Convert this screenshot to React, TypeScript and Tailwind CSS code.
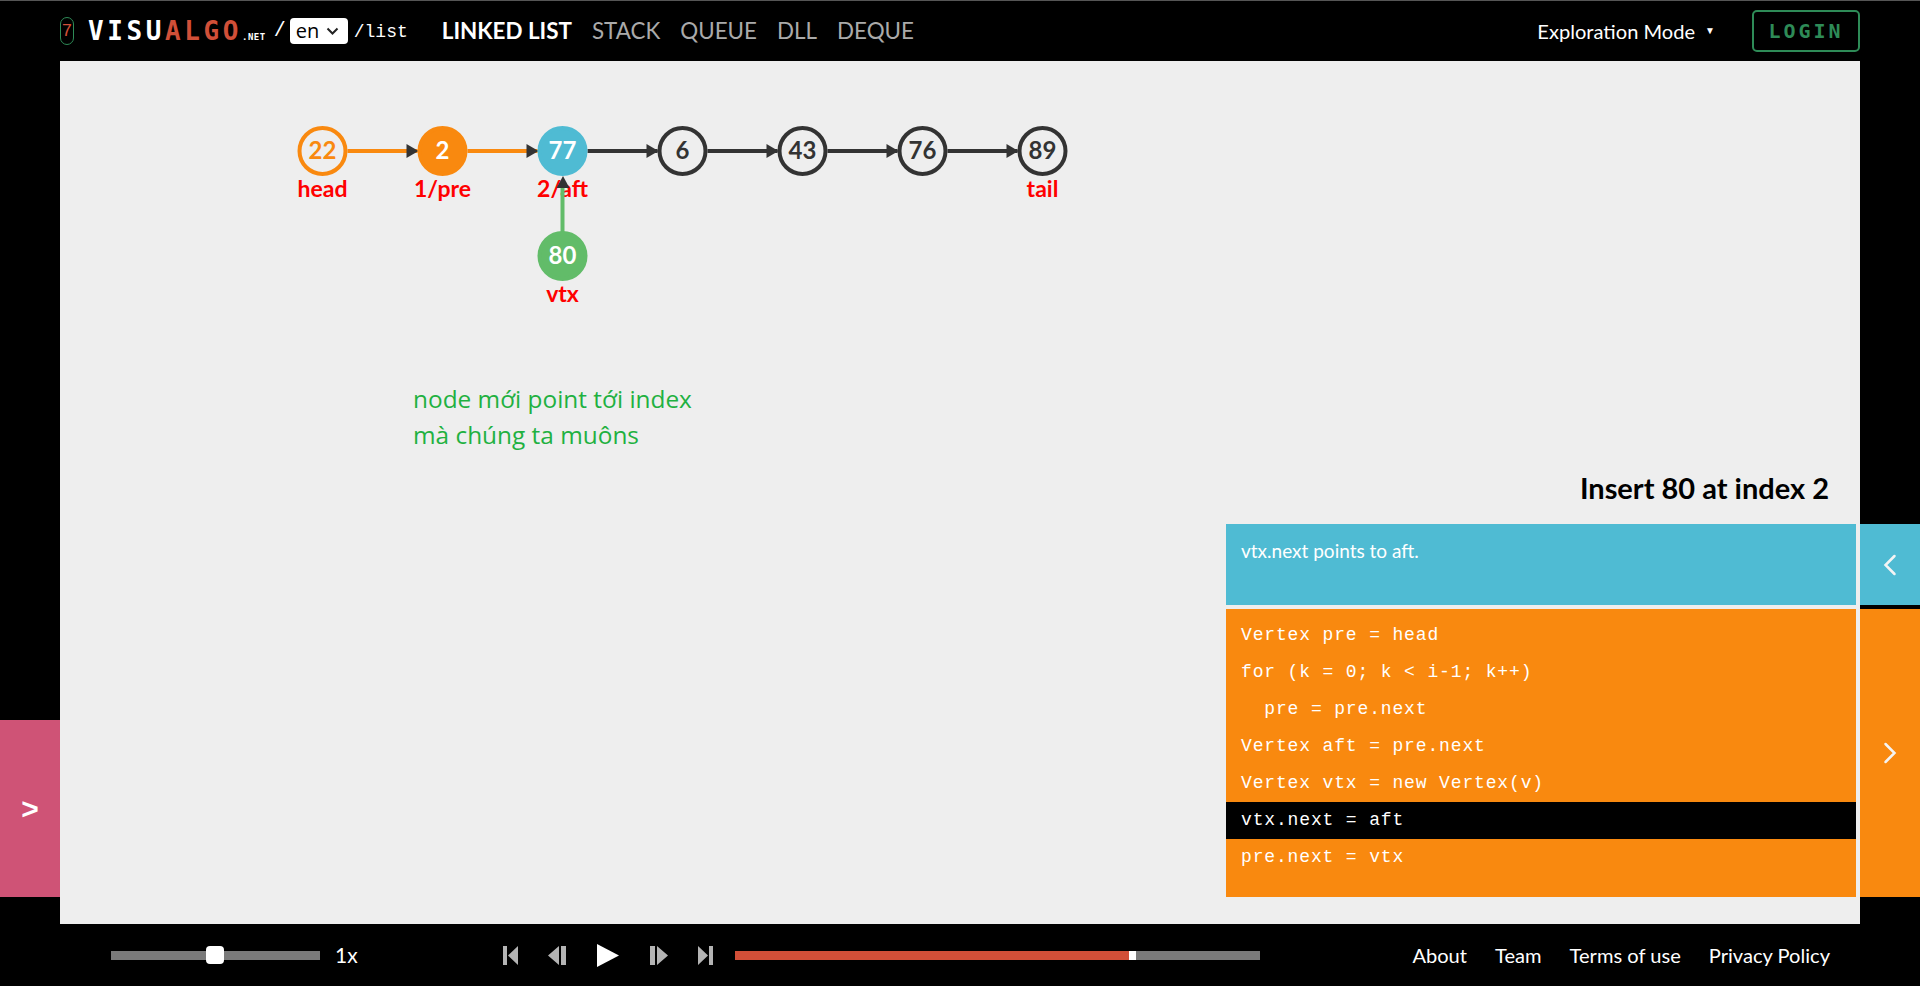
const CODE = [
  'Vertex pre = head',
  'for (k = 0; k < i-1; k++)',
  '  pre = pre.next',
  'Vertex aft = pre.next',
  'Vertex vtx = new Vertex(v)',
  'vtx.next = aft',
  'pre.next = vtx',
];

const ACTIVE_LINE = 5;

const SANS = 'font-["Lato","Open_Sans",sans-serif]';

type GraphNode = {
  x: number;
  y: number;
  value: string;
  label?: string;
  fill: string;
  stroke: string;
  text: string;
};

const NODES: GraphNode[] = [
  { x: 322, y: 151, value: '22', label: 'head', fill: '#eeeeee', stroke: '#f9890f', text: '#f9890f' },
  { x: 442, y: 151, value: '2', label: '1/pre', fill: '#f9890f', stroke: '#f9890f', text: '#ffffff' },
  { x: 562, y: 151, value: '77', label: '2/aft', fill: '#4fbbd3', stroke: '#4fbbd3', text: '#ffffff' },
  { x: 682, y: 151, value: '6', fill: '#eeeeee', stroke: '#333333', text: '#333333' },
  { x: 802, y: 151, value: '43', fill: '#eeeeee', stroke: '#333333', text: '#333333' },
  { x: 922, y: 151, value: '76', fill: '#eeeeee', stroke: '#333333', text: '#333333' },
  { x: 1042, y: 151, value: '89', label: 'tail', fill: '#eeeeee', stroke: '#333333', text: '#333333' },
  { x: 562, y: 256, value: '80', label: 'vtx', fill: '#62bc69', stroke: '#62bc69', text: '#ffffff' },
];

const EDGE_COLORS = ['#f9890f', '#f9890f', '#333333', '#333333', '#333333', '#333333'];

function Graph() {
  return (
    <svg width="1200" height="255" viewBox="59.5 61 1200 255" className="block shrink-0">
      {EDGE_COLORS.map((color, i) => {
        const x = NODES[i].x;
        return (
          <g key={i}>
            <rect x={x + 25} y={149} width={70} height={4} fill={color} />
            <path d={`M${x + 84} 144 L${x + 96} 151 L${x + 84} 158 Z`} fill="#333333" />
          </g>
        );
      })}
      {NODES.map((n) => (
        <g key={n.value}>
          <circle cx={n.x} cy={n.y} r={23} fill={n.fill} stroke={n.stroke} strokeWidth={4} />
          <text
            x={n.x}
            y={n.y + 8}
            textAnchor="middle"
            fill={n.text}
            fontSize={24}
            fontWeight={700}
            fontFamily="Lato, 'Open Sans', sans-serif"
          >
            {n.value}
          </text>
          {n.label && (
            <text
              x={n.x}
              y={n.y + 46}
              textAnchor="middle"
              fill="#ff0000"
              fontSize={23}
              fontWeight={700}
              fontFamily="Lato, 'Open Sans', sans-serif"
            >
              {n.label}
            </text>
          )}
        </g>
      ))}
      <rect x={560} y={186} width={4} height={46} fill="#62bc69" />
      <path d="M556 188 L562.5 176 L569 188 Z" fill="#333333" />
    </svg>
  );
}

function Header() {
  return (
    <header className="h-[61px] shrink-0 border-t border-[#555555] bg-black flex items-center pl-[60px] pr-[60px] text-white">
      <div className="w-[14px] h-[28px] rounded-[7px] border border-[#2e8b57] flex items-center justify-center text-[#d14f38] text-[18px] font-['Liberation_Mono',monospace]">
        7
      </div>
      <div className="ml-[14px] text-[26px] leading-none font-bold tracking-[3.6px] font-['DejaVu_Sans_Mono',monospace] whitespace-nowrap">
        VISU<span className="text-[#d14f38]">ALGO</span>
      </div>
      <span className="ml-[0px] mt-[13px] text-[9px] font-bold tracking-[0.5px] font-['DejaVu_Sans_Mono',monospace]">.NET</span>
      <span className="ml-[8px] text-[20px] font-['Liberation_Mono',monospace]">/</span>
      <div className="ml-[4px] w-[58px] h-[26px] bg-white rounded-[4px] text-black text-[20px] leading-[26px] pl-[6px] flex items-center gap-[7px] font-['Open_Sans',sans-serif]">
        en
        <svg width="13" height="9" viewBox="0 0 13 9" fill="none" stroke="#222" strokeWidth="2"><path d="M1.5 1.5 L6.5 6.5 L11.5 1.5" /></svg>
      </div>
      <span className="ml-[6px] text-[18px] mt-[2px] font-['Liberation_Mono',monospace]">/list</span>
      <nav className={`ml-[34px] flex items-center gap-[20px] text-[22.4px] text-[#aaaaaa] ${SANS}`}>
        <span className="font-bold text-white">LINKED LIST</span>
        <span>STACK</span>
        <span>QUEUE</span>
        <span>DLL</span>
        <span>DEQUE</span>
      </nav>
      <div className={`ml-auto flex items-center text-[20.1px] ${SANS}`}>
        Exploration Mode
        <span className="ml-[10px] text-[10px]">▼</span>
      </div>
      <div className="ml-[37px] w-[108px] h-[42px] rounded-[5px] border-2 border-[#2e8b57] flex items-center justify-center text-[#2e8b57] text-[20px] font-bold tracking-[3px] font-['DejaVu_Sans_Mono',monospace]">
        LOGIN
      </div>
    </header>
  );
}

function Chevron({ dir }: { dir: 'left' | 'right' }) {
  return (
    <svg width="14" height="22" viewBox="0 0 14 22" fill="none" stroke="#f4f4f4" strokeWidth="2.5" strokeLinecap="round">
      <path d={dir === 'left' ? 'M11.5 2 L2.5 11 L11.5 20' : 'M2.5 2 L11.5 11 L2.5 20'} />
    </svg>
  );
}

function Media({ d, w, h, color = '#b4b4b4' }: { d: string; w: number; h: number; color?: string }) {
  return (
    <svg width={w} height={h} viewBox={`0 0 ${w} ${h}`} fill={color} className="shrink-0">
      <path d={d} />
    </svg>
  );
}

function Footer() {
  return (
    <footer className={`h-[62px] shrink-0 bg-black flex items-center pl-[111px] pr-[90px] text-white ${SANS}`}>
      <div className="relative w-[209px] h-[9px] bg-[#7a7a7a]">
        <div className="absolute left-[95px] top-[-5px] w-[18px] h-[18px] rounded-[4px] bg-white" />
      </div>
      <span className="ml-[15px] w-[168px] text-[21px]">1x</span>
      <div className="flex items-center">
        <Media w={15} h={19} d="M0 0 H4 V19 H0 Z M15 0 V19 L5 9.5 Z" />
        <div className="w-[30px]" />
        <Media w={18} h={19} d="M11 0 V19 L0 9.5 Z M13 0 H18 V19 H13 Z" />
        <div className="w-[31px]" />
        <Media w={22} h={23} color="#ffffff" d="M0 0 L22 11.5 L0 23 Z" />
        <div className="w-[31px]" />
        <Media w={18} h={19} d="M0 0 H5 V19 H0 Z M7 0 L18 9.5 L7 19 Z" />
        <div className="w-[30px]" />
        <Media w={15} h={19} d="M0 0 L10 9.5 L0 19 Z M11 0 H15 V19 H11 Z" />
      </div>
      <div className="ml-[22px] w-[525px] h-[9px] bg-[#7a7a7a] flex">
        <div className="w-[394px] bg-[#d14f38]" />
        <div className="w-[7px] bg-white" />
      </div>
      <nav className="ml-auto flex items-center gap-[28px] text-[20.1px]">
        <span>About</span>
        <span>Team</span>
        <span>Terms of use</span>
        <span>Privacy Policy</span>
      </nav>
    </footer>
  );
}

export default function App() {
  return (
    <div className="w-[1920px] h-[986px] bg-black flex flex-col overflow-hidden">
      <Header />
      <div className="flex flex-1 min-h-0">
        <div className="w-[60px] shrink-0 flex flex-col justify-end pb-[27px]">
          <div className="h-[177px] bg-[#cf5376] flex items-center justify-center text-white text-[30px] font-bold font-['Liberation_Sans',sans-serif]">
            &gt;
          </div>
        </div>
        <main className={`w-[1800px] shrink-0 bg-[#eeeeee] flex flex-col ${SANS}`}>
          <Graph />
          <div className="ml-[353px] mt-[65px] text-[24.4px] leading-[36px] text-[#1fb141] font-['Open_Sans',sans-serif]">
            node mới point tới index
            <br />
            mà chúng ta muôns
          </div>
          <div className="mt-auto self-end w-[630px] mr-[4px] mb-[27px] text-white">
            <div className="h-[37px] pr-[27px] text-right text-black text-[29px] font-bold leading-[34px]">
              Insert 80 at index 2
            </div>
            <div className="mt-[16px] h-[81px] bg-[#4fbbd3] px-[15px] pt-[15px] text-[19px] leading-[24px]">
              vtx.next points to aft.
            </div>
            <div className="mt-[4px] h-[288px] bg-[#f9890f] pt-[8px] text-[18px] font-['Liberation_Mono',monospace]">
              {CODE.map((line, i) => (
                <div
                  key={line}
                  className={`h-[37px] px-[15px] leading-[37px] whitespace-pre tracking-[0.85px] ${i === ACTIVE_LINE ? 'bg-black' : ''}`}
                >
                  {line}
                </div>
              ))}
            </div>
          </div>
        </main>
        <div className="w-[60px] shrink-0 flex flex-col justify-end pb-[27px]">
          <div className="h-[81px] bg-[#4fbbd3] flex items-center justify-center">
            <Chevron dir="left" />
          </div>
          <div className="mt-[4px] h-[288px] bg-[#f9890f] flex items-center justify-center">
            <Chevron dir="right" />
          </div>
        </div>
      </div>
      <Footer />
    </div>
  );
}
